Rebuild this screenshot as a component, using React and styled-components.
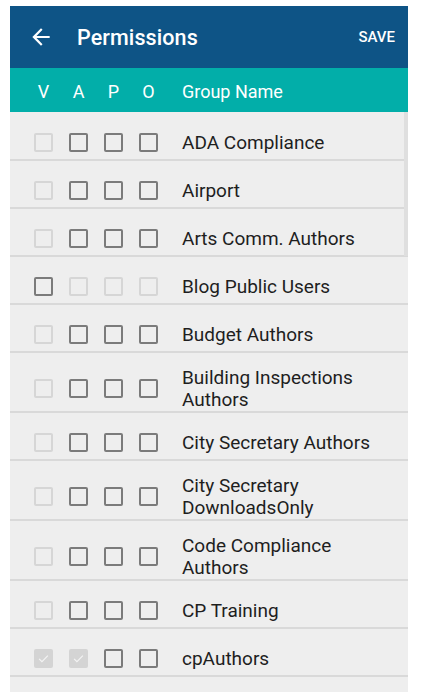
import React from 'react'
import styled, { createGlobalStyle } from 'styled-components'

const GlobalStyle = createGlobalStyle`
  html, body {
    margin: 0;
    background: #ffffff;
  }
  body {
    padding: 6px 13px 5px 10px;
    font-family: Roboto, "Noto Sans", "Liberation Sans", sans-serif;
  }
`

const groups = [
  { name: 'ADA Compliance', perms: ['off', 'on', 'on', 'on'] },
  { name: 'Airport', perms: ['off', 'on', 'on', 'on'] },
  { name: 'Arts Comm. Authors', perms: ['off', 'on', 'on', 'on'] },
  { name: 'Blog Public Users', perms: ['on', 'off', 'off', 'off'] },
  { name: 'Budget Authors', perms: ['off', 'on', 'on', 'on'] },
  { name: 'Building Inspections Authors', perms: ['off', 'on', 'on', 'on'] },
  { name: 'City Secretary Authors', perms: ['off', 'on', 'on', 'on'] },
  { name: 'City Secretary DownloadsOnly', perms: ['off', 'on', 'on', 'on'] },
  { name: 'Code Compliance Authors', perms: ['off', 'on', 'on', 'on'] },
  { name: 'CP Training', perms: ['off', 'on', 'on', 'on'] },
  { name: 'cpAuthors', perms: ['checked', 'checked', 'on', 'on'] },
]

function BackArrow() {
  return (
    <svg width="26" height="26" viewBox="0 0 24 24" fill="#ffffff">
      <path d="M20 11H7.83l5.59-5.59L12 4l-8 8 8 8 1.41-1.41L7.83 13H20v-2z" />
    </svg>
  )
}

function CheckBox({ state }) {
  return (
    <Box $state={state}>
      {state === 'checked' && (
        <svg width="15" height="15" viewBox="0 0 24 24">
          <path
            d="M5 12.5l4.5 4.5L19 7.5"
            fill="none"
            stroke="#f4f4f4"
            strokeWidth="1.8"
          />
        </svg>
      )}
    </Box>
  )
}

function App() {
  return (
    <>
      <GlobalStyle />
      <Screen>
        <TopBar>
          <BackButton>
            <BackArrow />
          </BackButton>
          <Title>Permissions</Title>
          <SaveButton>SAVE</SaveButton>
        </TopBar>
        <ColumnBar>
          <ColumnLabel>V</ColumnLabel>
          <ColumnLabel>A</ColumnLabel>
          <ColumnLabel>P</ColumnLabel>
          <ColumnLabel>O</ColumnLabel>
          <NameLabel>Group Name</NameLabel>
        </ColumnBar>
        <List>
          {groups.map((g) => (
            <Row key={g.name}>
              {g.perms.map((p, i) => (
                <Cell key={i}>
                  <CheckBox state={p} />
                </Cell>
              ))}
              <GroupName>{g.name}</GroupName>
            </Row>
          ))}
          <ScrollThumb />
        </List>
      </Screen>
    </>
  )
}

const Screen = styled.div`
  width: 398px;
  height: 686px;
  background: #eeeeee;
  display: flex;
  flex-direction: column;
  overflow: hidden;
`

const TopBar = styled.header`
  height: 62px;
  flex-shrink: 0;
  background: #0e5486;
  display: flex;
  align-items: center;
  padding: 0 13px 0 18px;
  color: #ffffff;
`

const BackButton = styled.div`
  display: flex;
  align-items: center;
  width: 26px;
  height: 26px;
`

const Title = styled.h1`
  margin: 0 0 0 23px;
  flex: 1;
  font-size: 21.5px;
  font-weight: 500;
  letter-spacing: 0.1px;
`

const SaveButton = styled.span`
  font-size: 15px;
  font-weight: 500;
`

const ColumnBar = styled.div`
  height: 44px;
  flex-shrink: 0;
  background: #02aea9;
  display: grid;
  grid-template-columns: repeat(4, 35px) 1fr;
  align-items: center;
  padding: 2px 0 0 16px;
  box-sizing: border-box;
  color: #ffffff;
  font-size: 18px;
`

const ColumnLabel = styled.span`
  text-align: center;
`

const NameLabel = styled.span`
  padding-left: 16px;
`

const List = styled.div`
  position: relative;
  flex: 1;
  padding-top: 1px;
`

const Row = styled.div`
  display: grid;
  grid-template-columns: repeat(4, 35px) 1fr;
  align-items: center;
  min-height: 31px;
  padding: 14px 0 1px 16px;
  border-bottom: 2px solid #d9d9d9;
`

const Cell = styled.div`
  display: flex;
  justify-content: center;
  align-items: center;
`

const Box = styled.span`
  width: 19px;
  height: 19px;
  box-sizing: border-box;
  border-radius: 2px;
  display: flex;
  align-items: center;
  justify-content: center;
  border: 2px solid
    ${({ $state }) =>
      $state === 'on' ? '#7b7b7b' : $state === 'checked' ? '#d4d4d4' : '#d6d6d6'};
  background: ${({ $state }) => ($state === 'checked' ? '#d4d4d4' : 'transparent')};
`

const GroupName = styled.span`
  padding: 0 30px 0 16px;
  font-size: 19px;
  line-height: 21.5px;
  color: #1e1e1e;
`

const ScrollThumb = styled.div`
  position: absolute;
  top: 0;
  right: 0;
  width: 4px;
  height: 144px;
  background: #dfdfdf;
`

export default App
